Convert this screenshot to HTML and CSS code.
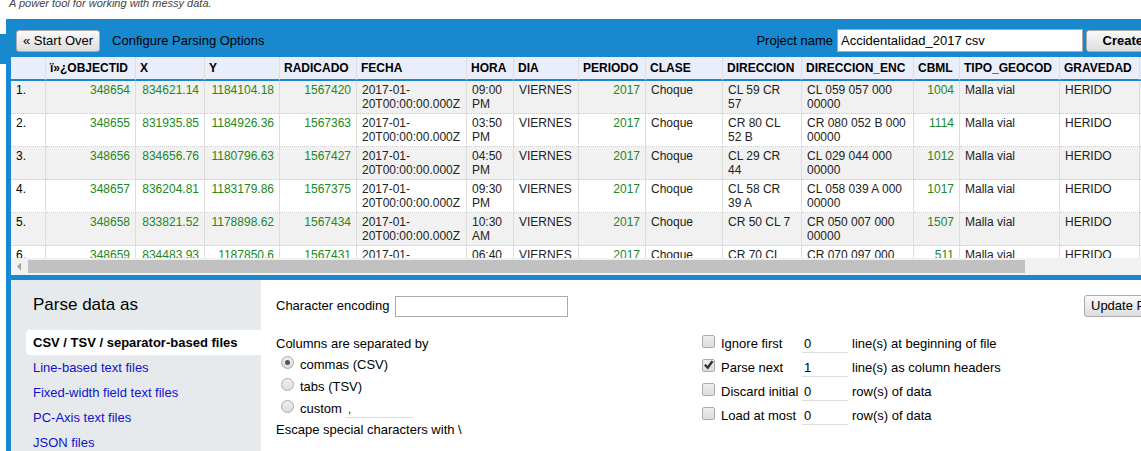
FILE: index.html
```
<!DOCTYPE html>
<html lang="en">
<head>
<meta charset="utf-8">
<title>Configure Parsing Options</title>
<link rel="stylesheet" href="styles.css">
</head>
<body>
<p class="slogan">A power tool for working with messy data.</p>
<div class="layout">
  <div class="tab-marker"></div>
  <main class="wizard">
    <header class="wizard-header">
      <button class="button" type="button">« Start Over</button>
      <span class="wizard-title">Configure Parsing Options</span>
      <label class="project-label" for="project-name">Project name</label>
      <input class="project-input" id="project-name" type="text" value="Accidentalidad_2017 csv">
      <button class="button button-primary" type="button">Create Project »</button>
    </header>
    <section class="preview">
      <div class="preview-view">
        <table class="data-table">
          <colgroup>
            <col class="w35"><col class="w90"><col class="w69"><col class="w75"><col class="w77"><col class="w110"><col class="w47"><col class="w65"><col class="w67"><col class="w77"><col class="w79"><col class="w112"><col class="w46"><col class="w100"><col class="w80"><col class="w80">
          </colgroup>
          <thead>
            <tr><th></th><th>ï»¿OBJECTID</th><th>X</th><th>Y</th><th>RADICADO</th><th>FECHA</th><th>HORA</th><th>DIA</th><th>PERIODO</th><th>CLASE</th><th>DIRECCION</th><th>DIRECCION_ENC</th><th>CBML</th><th>TIPO_GEOCOD</th><th>GRAVEDAD</th><th></th></tr>
          </thead>
          <tbody>
            <tr><td class="index">1.</td><td class="num">348654</td><td class="num">834621.14</td><td class="num">1184104.18</td><td class="num">1567420</td><td>2017-01-20T00:00:00.000Z</td><td>09:00 PM</td><td>VIERNES</td><td class="num">2017</td><td>Choque</td><td class="address">CL 59 CR 57</td><td>CL 059 057 000 00000</td><td class="num">1004</td><td>Malla vial</td><td>HERIDO</td><td></td></tr>
            <tr><td class="index">2.</td><td class="num">348655</td><td class="num">831935.85</td><td class="num">1184926.36</td><td class="num">1567363</td><td>2017-01-20T00:00:00.000Z</td><td>03:50 PM</td><td>VIERNES</td><td class="num">2017</td><td>Choque</td><td class="address">CR 80 CL 52 B</td><td>CR 080 052 B 000 00000</td><td class="num">1114</td><td>Malla vial</td><td>HERIDO</td><td></td></tr>
            <tr><td class="index">3.</td><td class="num">348656</td><td class="num">834656.76</td><td class="num">1180796.63</td><td class="num">1567427</td><td>2017-01-20T00:00:00.000Z</td><td>04:50 PM</td><td>VIERNES</td><td class="num">2017</td><td>Choque</td><td class="address">CL 29 CR 44</td><td>CL 029 044 000 00000</td><td class="num">1012</td><td>Malla vial</td><td>HERIDO</td><td></td></tr>
            <tr><td class="index">4.</td><td class="num">348657</td><td class="num">836204.81</td><td class="num">1183179.86</td><td class="num">1567375</td><td>2017-01-20T00:00:00.000Z</td><td>09:30 PM</td><td>VIERNES</td><td class="num">2017</td><td>Choque</td><td class="address">CL 58 CR 39 A</td><td>CL 058 039 A 000 00000</td><td class="num">1017</td><td>Malla vial</td><td>HERIDO</td><td></td></tr>
            <tr><td class="index">5.</td><td class="num">348658</td><td class="num">833821.52</td><td class="num">1178898.62</td><td class="num">1567434</td><td>2017-01-20T00:00:00.000Z</td><td>10:30 AM</td><td>VIERNES</td><td class="num">2017</td><td>Choque</td><td class="address">CR 50 CL 7</td><td>CR 050 007 000 00000</td><td class="num">1507</td><td>Malla vial</td><td>HERIDO</td><td></td></tr>
            <tr><td class="index">6.</td><td class="num">348659</td><td class="num">834483.93</td><td class="num">1187850.6</td><td class="num">1567431</td><td>2017-01-</td><td>06:40</td><td>VIERNES</td><td class="num">2017</td><td>Choque</td><td class="address">CR 70 CL</td><td>CR 070 097 000</td><td class="num">511</td><td>Malla vial</td><td>HERIDO</td><td></td></tr>
          </tbody>
        </table>
      </div>
      <div class="scrollbar">
        <svg class="scroll-arrow" width="17" height="17" viewBox="0 0 17 17" aria-hidden="true"><path d="M10 4.500v8L6 8.500z" fill="#a3a3a3"/></svg>
        <div class="scroll-thumb"></div>
      </div>
    </section>
    <section class="parsing">
      <nav class="formats">
        <h2 class="formats-title">Parse data as</h2>
        <a class="format selected" href="#csv">CSV / TSV / separator-based files</a>
        <a class="format" href="#line">Line-based text files</a>
        <a class="format" href="#fixed">Fixed-width field text files</a>
        <a class="format" href="#pc-axis">PC-Axis text files</a>
        <a class="format" href="#json">JSON files</a>
      </nav>
      <form class="options">
        <div class="encoding-row">
          <label for="encoding">Character encoding</label>
          <input class="encoding-input" id="encoding" type="text">
          <button class="button button-update" type="button">Update Preview</button>
        </div>
        <div class="option-columns">
          <div class="separators">
            <div class="line">Columns are separated by</div>
            <div class="choice"><input class="radio" type="radio" name="separator" id="commas" checked><label for="commas">commas (CSV)</label></div>
            <div class="choice"><input class="radio" type="radio" name="separator" id="tabs"><label for="tabs">tabs (TSV)</label></div>
            <div class="choice"><input class="radio" type="radio" name="separator" id="custom"><label for="custom">custom</label><input class="underline custom-input" type="text" value="," aria-label="Custom separator"></div>
            <div class="line">Escape special characters with \</div>
          </div>
          <div class="limits">
            <div class="limit"><input class="check" type="checkbox" id="ignore"><label class="limit-label" for="ignore">Ignore first</label><input class="underline" id="ignore-n" type="text" value="0"><label for="ignore-n">line(s) at beginning of file</label></div>
            <div class="limit"><input class="check" type="checkbox" id="headers" checked><label class="limit-label" for="headers">Parse next</label><input class="underline" id="headers-n" type="text" value="1"><label for="headers-n">line(s) as column headers</label></div>
            <div class="limit"><input class="check" type="checkbox" id="discard"><label class="limit-label" for="discard">Discard initial</label><input class="underline" id="discard-n" type="text" value="0"><label for="discard-n">row(s) of data</label></div>
            <div class="limit"><input class="check" type="checkbox" id="load"><label class="limit-label" for="load">Load at most</label><input class="underline" id="load-n" type="text" value="0"><label for="load-n">row(s) of data</label></div>
          </div>
        </div>
      </form>
    </section>
  </main>
</div>
</body>
</html>
```
FILE: styles.css
```
* { box-sizing: border-box; }

body {
  display: flex;
  flex-direction: column;
  height: 100vh;
  margin: 0;
  overflow: hidden;
  background: #fff;
  color: #000;
  font: 13px/16px "Liberation Sans", Arial, sans-serif;
}

input, button { font: inherit; color: inherit; margin: 0; }

.slogan {
  margin: -5px 0 0;
  padding: 0 9px 8px;
  color: #444;
  font-size: 11px;
  font-style: italic;
}

.layout { display: flex; flex: 1; min-height: 0; }

.tab-marker { flex: none; width: 6px; height: 30px; margin-top: 15px; background: #1888cf; }

/* The wizard runs past the right edge of the window. */
.wizard {
  display: flex;
  flex: 1;
  flex-direction: column;
  min-width: 0;
  margin-right: -82px;
  padding-left: 5px;
  background: #1888cf;
}

.wizard-header {
  display: flex;
  align-items: center;
  height: 38px;
  padding: 5px 5px 0;
  white-space: nowrap;
}

.button {
  height: 22px;
  padding: 0 6px;
  border: 1px solid #aaa;
  border-radius: 3px;
  background: linear-gradient(#fafafa, #ddd);
  white-space: nowrap;
}

.button-primary { width: 132px; font-weight: bold; }
.wizard-title { margin: 0 auto 0 12px; }
.project-label { margin-right: 4px; }

.project-input {
  width: 246px;
  height: 23px;
  margin-right: 3px;
  padding: 0 3px;
  border: 1px solid #aaa;
  background: #fff;
}

.preview { flex: none; border-bottom: 5px solid #1888cf; background: #fff; }
.preview-view { height: 201px; overflow: hidden; }

.data-table {
  width: 1209px;
  border-collapse: separate;
  border-spacing: 0;
  table-layout: fixed;
  font-size: 12px;
  line-height: 14px;
}

.w35 { width: 35px; }
.w46 { width: 46px; }
.w47 { width: 47px; }
.w65 { width: 65px; }
.w67 { width: 67px; }
.w69 { width: 69px; }
.w75 { width: 75px; }
.w77 { width: 77px; }
.w79 { width: 79px; }
.w80 { width: 80px; }
.w90 { width: 90px; }
.w100 { width: 100px; }
.w110 { width: 110px; }
.w112 { width: 112px; }

th {
  height: 24px;
  padding: 0 0 0 4px;
  border-right: 1px solid #ddd;
  border-bottom: 2px solid #1888cf;
  background: #eaedfa;
  text-align: left;
  white-space: nowrap;
}

td {
  height: 33px;
  padding: 2px 4px 2px 5px;
  border-right: 1px solid #ddd;
  border-bottom: 1px dotted #ccc;
  color: #222;
  vertical-align: top;
}

tbody tr:nth-child(odd) { background: #f1f1f1; }
.num { padding-right: 5px; color: #282; text-align: right; }
.address { padding-right: 10px; }
.index { color: #000; }

.scrollbar { display: flex; align-items: center; height: 17px; background: #f1f1f1; }
.scroll-arrow { flex: none; }
.scroll-thumb { width: 997px; height: 13px; background: #c1c1c1; }

.parsing { display: flex; flex: 1; min-height: 0; background: #fff; }

.formats { flex: none; width: 250px; padding: 12px 0 0 15px; background: #e6eaed; }

.formats-title {
  margin: 0 0 13px;
  padding-left: 7px;
  font-size: 17px;
  font-weight: normal;
  line-height: 25px;
}

.format {
  display: block;
  padding-left: 7px;
  border-radius: 4px 0 0 4px;
  color: #11c;
  line-height: 25px;
  text-decoration: none;
}

.selected { background: #fff; color: #000; font-weight: bold; }

.options { flex: 1; padding: 15px 15px 0; white-space: nowrap; }
.encoding-row { display: flex; align-items: center; height: 22px; }
.encoding-input { width: 173px; height: 21px; margin: 0 auto 0 6px; border: 1px solid #aaa; }
.button-update { width: 124px; text-align: left; }

.option-columns { display: grid; grid-template-columns: 426px 1fr; padding-top: 15px; }
.separators { padding-top: 2px; }
.line { line-height: 20px; }
.choice { display: flex; align-items: center; height: 22px; padding-left: 5px; }
.limit { display: flex; align-items: center; height: 24px; }
.limit-label { width: 81px; }

.radio, .check {
  flex: none;
  appearance: none;
  width: 13px;
  height: 13px;
  margin: 0 6px 5px 0;
  border: 1px solid #aaa;
  background: linear-gradient(#eee, #ddd);
}

.radio { display: grid; place-items: center; border-radius: 50%; }
.radio:checked::before { content: ""; width: 5px; height: 5px; border-radius: 50%; background: #555; }
.check { border-radius: 2px; }

.check:checked::before {
  content: "";
  display: block;
  width: 11px;
  height: 10px;
  background: #333;
  clip-path: polygon(9% 55%, 27% 40%, 41% 60%, 77% 5%, 96% 18%, 45% 95%);
}

.underline {
  width: 46px;
  height: 18px;
  margin-right: 4px;
  padding: 0 2px;
  border: 0;
  border-bottom: 1px solid #ddd;
  background: none;
}

.custom-input { width: 67px; margin-left: 4px; font-size: 11px; }
```
